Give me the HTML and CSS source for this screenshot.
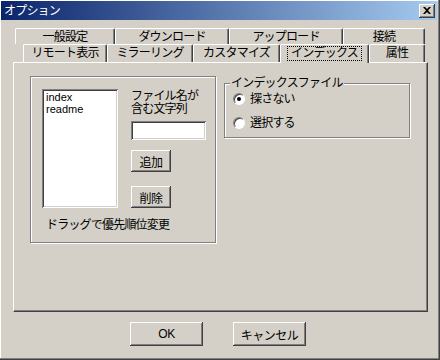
FILE: index.html
```html
<!DOCTYPE html>
<html lang="ja">
<head>
    <meta charset="UTF-8">
    <title>オプション</title>
    <link rel="stylesheet" href="styles.css">
</head>
<body>

<div class="window">
    <div class="titlebar">
        <span class="title">オプション</span>
        <button class="close-btn" aria-label="閉じる">
            <svg width="8" height="7" viewBox="0 0 8 7">
                <path d="M0 0h2l2 2 2-2h2L5 3.5 8 7H6L4 5 2 7H0l3-3.5z" fill="#000"/>
            </svg>
        </button>
    </div>

    <div class="tabs">
        <div class="tab-row row-back">
            <div class="tab w100">一般設定</div>
            <div class="tab w114">ダウンロード</div>
            <div class="tab w114">アップロード</div>
            <div class="tab w82">接続</div>
        </div>
        <div class="tab-row row-front">
            <div class="tab w83">リモート表示</div>
            <div class="tab w86">ミラーリング</div>
            <div class="tab w87">カスタマイズ</div>
            <div class="tab w89 selected"><span class="focus">インデックス</span></div>
            <div class="tab w56">属性</div>
        </div>
    </div>

    <div class="panel">
        <div class="group group-files">
            <div class="files-row">
                <div class="listbox">
                    <div>index</div>
                    <div>readme</div>
                </div>
                <div class="side">
                    <p class="side-label">ファイル名が<br>含む文字列</p>
                    <input class="textbox" type="text">
                    <button class="btn btn-small btn-add">追加</button>
                    <button class="btn btn-small btn-del">削除</button>
                </div>
            </div>
            <p class="hint">ドラッグで優先順位変更</p>
        </div>

        <fieldset class="group group-index">
            <legend>インデックスファイル</legend>
            <label class="radio-row">
                <span class="radio checked"></span>探さない
            </label>
            <label class="radio-row">
                <span class="radio"></span>選択する
            </label>
        </fieldset>
    </div>

    <div class="footer">
        <button class="btn btn-wide">OK</button>
        <button class="btn btn-wide">キャンセル</button>
    </div>
</div>

</body>
</html>
```

FILE: styles.css
```css
* {
    margin: 0;
    padding: 0;
    box-sizing: border-box;
}

body {
    width: 440px;
    height: 360px;
    font-family: "Liberation Sans", "Noto Sans CJK JP", sans-serif;
    font-size: 12px;
    line-height: 14px;
    letter-spacing: -0.8px;
    color: #000;
    background-color: #d4d0c8;
    overflow: hidden;
}

/* Window frame */
.window {
    width: 440px;
    height: 360px;
    padding: 1px 3px 0 1px;
    background-color: #d4d0c8;
    box-shadow: inset -1px -1px #404040, inset -2px -2px #808080, inset 1px 1px #fff;
}

.titlebar {
    height: 19px;
    display: flex;
    align-items: center;
    justify-content: space-between;
    padding: 0 2px 0 3px;
    background: linear-gradient(to right, #0a246a, #a6caf0);
}

.title {
    color: #fff;
    font-size: 12px;
}

.close-btn {
    width: 16px;
    height: 14px;
    display: flex;
    align-items: center;
    justify-content: center;
    border: none;
    background-color: #d4d0c8;
    box-shadow: inset -1px -1px #404040, inset 1px 1px #fff, inset -2px -2px #808080;
}

/* Tabs */
.tabs {
    margin-top: 8px;
}

.tab-row {
    display: flex;
}

.row-back {
    height: 16px;
    margin-left: 14px;
}

.row-front {
    height: 18px;
    margin-left: 22px;
}

.tab {
    display: flex;
    align-items: center;
    justify-content: center;
    border-top: 1px solid #fff;
    border-left: 1px solid #fff;
    border-right: 1px solid #404040;
    border-radius: 2px 2px 0 0;
    box-shadow: inset -1px 0 #808080;
    background-color: #d4d0c8;
    white-space: nowrap;
}

.row-front .tab {
    padding-bottom: 1px;
}

.tab.selected {
    height: 19px;
    position: relative;
    z-index: 1;
}

.focus {
    padding: 0 3px;
    border: 1px dotted #000;
    line-height: 13px;
}

.w100 { width: 100px; }
.w114 { width: 114px; }
.w82 { width: 82px; }
.w83 { width: 84px; }
.w86 { width: 86px; }
.w87 { width: 87px; }
.w89 { width: 89px; }
.w56 { width: 56px; }

/* Panel */
.panel {
    width: 415px;
    height: 250px;
    margin-left: 12px;
    display: flex;
    align-items: flex-start;
    padding: 13px 0 0 16px;
    border-top: 1px solid #fff;
    border-left: 1px solid #fff;
    border-right: 1px solid #404040;
    border-bottom: 1px solid #404040;
    box-shadow: inset -1px -1px #808080;
}

.group {
    border: 1px solid #808080;
    box-shadow: 1px 1px 0 #fff, inset 1px 1px 0 #fff;
}

.group-files {
    width: 186px;
    height: 167px;
    padding: 12px 0 0 11px;
}

.files-row {
    display: flex;
    gap: 13px;
}

.listbox {
    width: 76px;
    height: 119px;
    padding: 2px 4px;
    background-color: #fff;
    line-height: 12px;
    font-size: 11px;
    letter-spacing: 0;
    box-shadow: inset 1px 1px #808080, inset -1px -1px #fff, inset 2px 2px #404040, inset -2px -2px #d4d0c8;
}

.side {
    display: flex;
    flex-direction: column;
    align-items: flex-start;
    padding-top: 1px;
}

.side-label {
    line-height: 13px;
}

.textbox {
    width: 75px;
    height: 19px;
    margin-top: 5px;
    border: none;
    background-color: #fff;
    box-shadow: inset 1px 1px #808080, inset -1px -1px #fff, inset 2px 2px #404040, inset -2px -2px #d4d0c8;
}

.btn {
    font-family: inherit;
    font-size: 12px;
    letter-spacing: -0.5px;
    border: none;
    background-color: #d4d0c8;
    box-shadow: inset -1px -1px #404040, inset 1px 1px #fff, inset -2px -2px #808080;
}

.btn-small {
    width: 40px;
    height: 22px;
}

.btn-add {
    margin-top: 10px;
}

.btn-del {
    margin-top: 14px;
}

.hint {
    margin: 10px 0 0 4px;
}

/* Index file group */
.group-index {
    width: 186px;
    height: 62px;
    margin: 0 0 0 8px;
    padding: 2px 0 0 8px;
    box-shadow: 1px 1px 0 #fff, inset 1px 1px 0 #fff;
}

.group-index legend {
    margin-left: -3px;
    padding: 0 1px;
    background-color: #d4d0c8;
}

.radio-row {
    display: flex;
    align-items: center;
    gap: 5px;
    height: 14px;
    margin-bottom: 10px;
}

.radio {
    position: relative;
    width: 12px;
    height: 12px;
    border-radius: 50%;
    background-color: #fff;
    border: 1px solid;
    border-color: #808080 #fff #fff #808080;
    box-shadow: inset 1px 1px #404040;
}

.radio.checked::after {
    content: "";
    position: absolute;
    left: 3px;
    top: 3px;
    width: 4px;
    height: 4px;
    border-radius: 50%;
    background-color: #000;
}

/* Footer buttons */
.footer {
    display: flex;
    justify-content: center;
    gap: 30px;
    margin-top: 10px;
    padding-right: 2px;
}

.btn-wide {
    width: 73px;
    height: 24px;
}
```
